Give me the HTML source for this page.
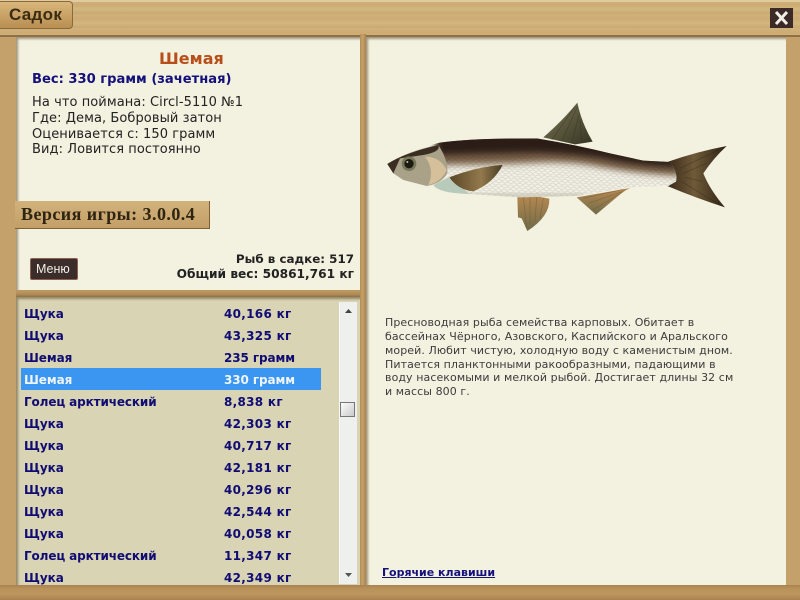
<!DOCTYPE html>
<html><head><meta charset="utf-8">
<style>
html,body{margin:0;padding:0}
body{width:800px;height:600px;overflow:hidden;position:relative;background:#c4a16a;font-family:"DejaVu Sans","Liberation Sans",sans-serif;font-size:13px}
.abs,.t{position:absolute}
.t{white-space:nowrap;line-height:15px}
.wood{position:absolute;left:0;top:0;width:800px;height:36px;background:repeating-linear-gradient(180deg,#d1b27b 0,#cdac74 5px,#d3b57f 9px,#c9a970 14px)}
.panel{position:absolute;background:#f3f1df;box-shadow:inset 2px 2px 2px rgba(80,60,30,.5)}
.bar{position:absolute;background:linear-gradient(90deg,#b08d5a,#c8a268 40%,#a88452)}
.hbar{position:absolute;background:linear-gradient(180deg,#c09a62,#b28c56 60%,#8f7045)}
.row{position:absolute;left:24px;width:300px;font-weight:bold;color:#100c74;font-size:12px;line-height:15px;white-space:nowrap;letter-spacing:-.05px}
.row b{position:absolute;left:200px;top:0;letter-spacing:.3px}
.row b.g{letter-spacing:-.1px}
.d{left:385px;font-size:11px;line-height:14px;color:#3c3c3c;letter-spacing:.08px}
.i{left:32px;color:#222;font-size:13px;letter-spacing:.07px}
</style></head><body>
<div class="wood"></div>
<div class="abs" style="left:0;top:0;width:800px;height:2px;background:#e0cb9f"></div>
<div class="abs" style="left:0;top:35px;width:800px;height:2px;background:#8f6f43"></div>
<div class="abs" style="left:0;top:1px;width:73px;height:28px;background:linear-gradient(180deg,#d9b67c,#b98f52);border:1px solid #8a6a3b;border-left:0;border-radius:0 4px 4px 0;box-sizing:border-box"></div>
<div class="t" style="left:9px;top:5px;font:bold 17px/20px 'Liberation Sans',sans-serif;color:#3a2c12;letter-spacing:.3px">Садок</div>
<div class="abs" style="left:770px;top:8px;width:23px;height:20px;background:#3b2a25"></div>
<svg class="abs" style="left:770px;top:8px" width="23" height="20"><path d="M6 4L17 16M17 4L6 16" stroke="#f1efe6" stroke-width="3"/></svg>

<div class="panel" style="left:16px;top:37px;width:344px;height:253px"></div>
<div class="panel" style="left:16px;top:297px;width:344px;height:288px;background:#d8d4b4"></div>
<div class="panel" style="left:366px;top:37px;width:420px;height:548px"></div>
<div class="bar" style="left:360px;top:34px;width:6px;height:551px"></div>
<div class="hbar" style="left:16px;top:290px;width:344px;height:7px"></div>
<div class="hbar" style="left:0;top:585px;width:800px;height:15px;background:linear-gradient(180deg,#a98250,#b99259 25%,#bd9660 60%,#a98250)"></div>

<div class="t" style="left:159px;top:50px;font-size:16px;line-height:18px;font-weight:bold;color:#b84e1a">Шемая</div>
<div class="t" style="left:32px;top:72px;font-size:13.1px;font-weight:bold;color:#14107c">Вес: 330 грамм (зачетная)</div>
<div class="t i" style="top:95px">На что поймана: Circl-5110 №1</div>
<div class="t i" style="top:111px">Где: Дема, Бобровый затон</div>
<div class="t i" style="top:127px">Оценивается с: 150 грамм</div>
<div class="t i" style="top:142px">Вид: Ловится постоянно</div>

<div class="abs" style="left:15px;top:201px;width:195px;height:28px;background:linear-gradient(180deg,#d2b27c,#c39f66);border-bottom:1px solid #7d6034;border-right:1px solid #7d6034;box-sizing:border-box"></div>
<div class="t" style="left:21px;top:204px;font:bold 18px/20px 'Liberation Serif',serif;color:#2e2412;letter-spacing:.45px">Версия игры: 3.0.0.4</div>

<div class="abs" style="left:30px;top:258px;width:48px;height:22px;background:#3a2d2a;border:1px solid #8d5f4e;box-sizing:border-box;border-radius:2px"></div>
<div class="t" style="left:36px;top:261px;font:12.5px/16px 'Liberation Sans',sans-serif;color:#f3f0e6">Меню</div>
<div class="t" style="right:446px;top:252px;font-size:11.9px;font-weight:bold;color:#222">Рыб в садке: 517</div>
<div class="t" style="right:446px;top:267px;font-size:12.2px;font-weight:bold;color:#222">Общий вес: 50861,761 кг</div>

<div class="abs" style="left:21px;top:368px;width:300px;height:22px;background:#3a96f0"></div>
<div class="row" style="top:307px">Щука<b>40,166 кг</b></div>
<div class="row" style="top:329px">Щука<b>43,325 кг</b></div>
<div class="row" style="top:351px">Шемая<b class="g">235 грамм</b></div>
<div class="row" style="top:373px;color:#eef4fa">Шемая<b class="g">330 грамм</b></div>
<div class="row" style="top:395px;letter-spacing:-.12px">Голец арктический<b>8,838 кг</b></div>
<div class="row" style="top:417px">Щука<b>42,303 кг</b></div>
<div class="row" style="top:439px">Щука<b>40,717 кг</b></div>
<div class="row" style="top:461px">Щука<b>42,181 кг</b></div>
<div class="row" style="top:483px">Щука<b>40,296 кг</b></div>
<div class="row" style="top:505px">Щука<b>42,544 кг</b></div>
<div class="row" style="top:527px">Щука<b>40,058 кг</b></div>
<div class="row" style="top:549px;letter-spacing:-.12px">Голец арктический<b>11,347 кг</b></div>
<div class="row" style="top:571px;height:14px;overflow:hidden">Щука<b>42,349 кг</b></div>

<div class="abs" style="left:339px;top:302px;width:18px;height:282px;background:#eef0ee;border-left:1px solid #fafafa;box-sizing:border-box"></div>
<svg class="abs" style="left:339px;top:302px" width="18" height="282">
<path d="M6 11L9.500 7L13 11Z" fill="#444"/><path d="M6 271L9.500 275L13 271Z" fill="#555"/>
<defs><linearGradient id="th" x1="0" y1="0" x2="1" y2="1"><stop offset="0" stop-color="#fff"/><stop offset="1" stop-color="#c8c8c8"/></linearGradient></defs>
<rect x="1.500" y="100.500" width="14" height="14" fill="url(#th)" stroke="#777"/>
</svg>

<svg class="abs" style="left:370px;top:90px" width="370" height="150" viewBox="0 0 1110 450">
<defs>
<clipPath id="bc"><path d="M52 222Q120 180 210 158Q300 145 500 145Q620 165 720 190L820 212L900 216Q925 250 918 275L895 288L780 292L620 318L450 322L300 312L230 292L170 290L100 270L70 250Z"/></clipPath>
<filter id="bl" x="-10%" y="-30%" width="120%" height="160%"><feGaussianBlur stdDeviation="10"/></filter>
<linearGradient id="tl" x1="0" y1="0" x2="1" y2="0"><stop offset="0" stop-color="#39291b"/><stop offset=".45" stop-color="#6f5a38"/><stop offset="1" stop-color="#2d2216"/></linearGradient>
<linearGradient id="df" x1="0" y1="0" x2="1" y2="1"><stop offset="0" stop-color="#7a7656"/><stop offset="1" stop-color="#363522"/></linearGradient>
<linearGradient id="af" x1="0" y1="0" x2="0" y2="1"><stop offset="0" stop-color="#b98a52"/><stop offset="1" stop-color="#6f6b48"/></linearGradient>
<linearGradient id="pf" x1="0" y1="0" x2="1" y2="0"><stop offset="0" stop-color="#5a4628"/><stop offset=".6" stop-color="#93794c"/><stop offset="1" stop-color="#463a24"/></linearGradient>
<pattern id="sc" width="18" height="14" patternUnits="userSpaceOnUse" patternTransform="rotate(4)"><path d="M0 7Q9 -2 18 7M-9 14Q0 5 9 14M9 14Q18 5 27 14" fill="none" stroke="#2d2015" stroke-opacity=".2" stroke-width="1.500"/></pattern>
</defs>
<path d="M520 142Q580 90 622 38Q635 100 668 155Q640 160 615 163Z" fill="url(#df)"/>
<g stroke="#2e2e1c" stroke-opacity=".5" stroke-width="2" fill="none"><path d="M545 150L615 50M575 155L622 50M605 160L628 70M635 158L630 90"/></g>
<path d="M895 215Q980 185 1070 168Q1030 205 1000 250Q1020 300 1065 352Q980 325 892 288Z" fill="url(#tl)"/>
<g stroke="#2a1f12" stroke-opacity=".4" stroke-width="2" fill="none"><path d="M930 235L1050 178M940 250L1010 220M935 275L1050 345M945 262L1000 275"/></g>
<path d="M620 322L780 294L760 305L678 374Z" fill="url(#af)"/>
<g stroke="#6a5030" stroke-opacity=".5" stroke-width="2" fill="none"><path d="M640 325L760 298M655 340L765 302M668 360L760 305"/></g>
<path d="M442 320L450 310L538 326Q540 380 472 423L455 385L444 382Z" fill="url(#af)"/>
<g stroke="#6a5030" stroke-opacity=".5" stroke-width="2" fill="none"><path d="M460 318L470 415M480 320L480 405M500 322L495 395M520 325L510 385"/></g>
<g clip-path="url(#bc)">
<rect x="40" y="130" width="900" height="200" fill="#f2f0e5"/>
<path d="M200 130H930V258Q800 250 700 232Q600 212 500 218Q350 225 200 225Z" fill="#7a6248" filter="url(#bl)"/>
<path d="M200 130H930V232Q800 228 700 205Q600 190 500 188Q350 190 200 195Z" fill="#2a1a12" filter="url(#bl)"/>
<path d="M200 160Q300 145 500 145Q620 165 720 190L820 212L900 216Q925 250 918 275L895 288L780 292L620 318L450 322L300 312L235 290L230 230Z" fill="url(#sc)"/>
<path d="M260 312H640V326H260Z" fill="#bdbba8" filter="url(#bl)"/>
</g>
<path d="M52 222Q120 180 205 165Q235 210 232 250Q215 280 170 288L100 270L70 250Z" fill="#aaa288"/>
<path d="M52 222Q100 190 205 165Q215 185 160 195L90 205L70 250Z" fill="#3a2e22"/>
<path d="M165 200Q210 200 230 240Q215 275 175 285Q195 240 165 200Z" fill="#d6c09a"/>
<circle cx="117" cy="221" r="22" fill="#77785a"/><circle cx="117" cy="221" r="14" fill="#1d1a12"/><circle cx="112" cy="216" r="3" fill="#c9c5a8"/>
<path d="M190 285Q205 310 300 312L235 262Z" fill="#b8cbbb"/>
<path d="M238 262Q320 230 398 225Q370 280 310 304Q265 300 238 262Z" fill="url(#pf)"/>
</svg>

<div class="t d" style="top:316px">Пресноводная рыба семейства карповых. Обитает в</div>
<div class="t d" style="top:330px">бассейнах Чёрного, Азовского, Каспийского и Аральского</div>
<div class="t d" style="top:344px">морей. Любит чистую, холодную воду с каменистым дном.</div>
<div class="t d" style="top:358px">Питается планктонными ракообразными, падающими в</div>
<div class="t d" style="top:371px">воду насекомыми и мелкой рыбой. Достигает длины 32 см</div>
<div class="t d" style="top:385px">и массы 800 г.</div>

<div class="t" style="left:382px;top:565px;font-size:11px;font-weight:bold;color:#14107c;text-decoration:underline">Горячие клавиши</div>
</body></html>
